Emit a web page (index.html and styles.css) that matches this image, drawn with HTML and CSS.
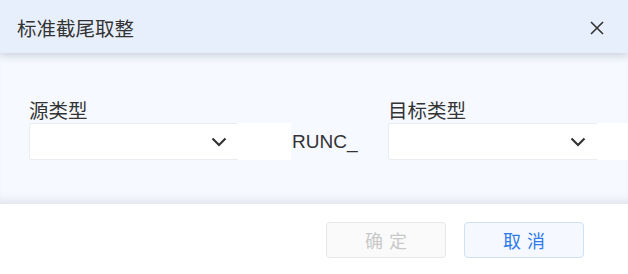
FILE: index.html
```html
<!DOCTYPE html>
<html lang="zh">
<head>
<meta charset="utf-8">
<title>标准截尾取整</title>
<link rel="stylesheet" href="styles.css">
</head>
<body>
<div class="dialog">
  <div class="header">
    <span class="title">标准截尾取整</span>
    <svg class="close" width="14" height="14" viewBox="0 0 14 14"><path d="M1 1L13 13M13 1L1 13" stroke="#333" stroke-width="1.6" fill="none"/></svg>
  </div>
  <div class="body">
    <div class="row">
      <div class="field">
        <div class="label">源类型</div>
        <div class="select-wrap">
          <div class="select">
            <svg class="chev" width="16" height="10" viewBox="0 0 16 10"><path d="M1.5 1.5L8 8L14.5 1.5" stroke="#333" stroke-width="2.2" fill="none"/></svg>
          </div>
        </div>
      </div>
      <div class="mid">RUNC_</div>
      <div class="field">
        <div class="label">目标类型</div>
        <div class="select-wrap">
          <div class="select">
            <svg class="chev" width="16" height="10" viewBox="0 0 16 10"><path d="M1.5 1.5L8 8L14.5 1.5" stroke="#333" stroke-width="2.2" fill="none"/></svg>
          </div>
        </div>
      </div>
    </div>
  </div>
  <div class="footer">
    <button class="btn disabled">确定</button>
    <button class="btn cancel">取消</button>
  </div>
</div>
</body>
</html>
```
FILE: styles.css
```css
* { box-sizing: border-box; }
html, body { margin: 0; padding: 0; background: #fff; }
body { font-family: "Noto Sans CJK SC", "Liberation Sans", sans-serif; color: #333; }
.dialog { width: 628px; height: 274px; display: flex; flex-direction: column; overflow: hidden; }
.header {
  height: 53px; flex: none; background: #e8effc;
  display: flex; align-items: center; justify-content: space-between;
  padding: 3px 24px 0 17px;
  box-shadow: 0 3px 8px rgba(60, 70, 90, 0.22);
  position: relative; z-index: 1;
}
.title { font-size: 19.5px; line-height: 24px; color: #333; }
.close { display: block; }
.body {
  height: 151px; flex: none; background: #f6f9ff;
  box-shadow: inset 0 -9px 10px -6px rgba(60, 70, 100, 0.13);
  padding: 45px 0 0 29px;
}
.row { display: flex; align-items: flex-end; }
.field { display: flex; flex-direction: column; }
.label { font-size: 19.5px; line-height: 24px; margin-bottom: 1px; color: #333; }
.select-wrap { width: 262px; height: 37px; background: #fff; display: flex; }
.select {
  width: 209px; height: 37px; background: #fff;
  border: 1px solid #e9ecf0; border-right: none; border-radius: 2px 0 0 2px;
  display: flex; align-items: center; justify-content: flex-end; padding-right: 11px;
}
.field + .mid + .field .select-wrap { width: 240px; }
.mid {
  font-family: "Liberation Sans", Arial, sans-serif; font-size: 19px; line-height: 37px;
  color: #333; width: 97px; padding-left: 1px;
}
.footer {
  flex: 1; background: #fff;
  display: flex; justify-content: flex-end; align-items: flex-start;
  gap: 18px; padding: 18px 44px 0 0;
}
.btn {
  width: 120px; height: 36px; border-radius: 4px; font-family: "Noto Sans CJK SC", sans-serif;
  font-size: 18px; letter-spacing: 6px; padding: 0 0 0 6px; line-height: 34px;
  cursor: pointer;
}
.btn.disabled { background: #fafafa; border: 1px solid #e7e7e7; color: #c9c9c9; }
.btn.cancel { background: #f5f9ff; border: 1px solid #cfe0fa; color: #2f7aee; }
```
